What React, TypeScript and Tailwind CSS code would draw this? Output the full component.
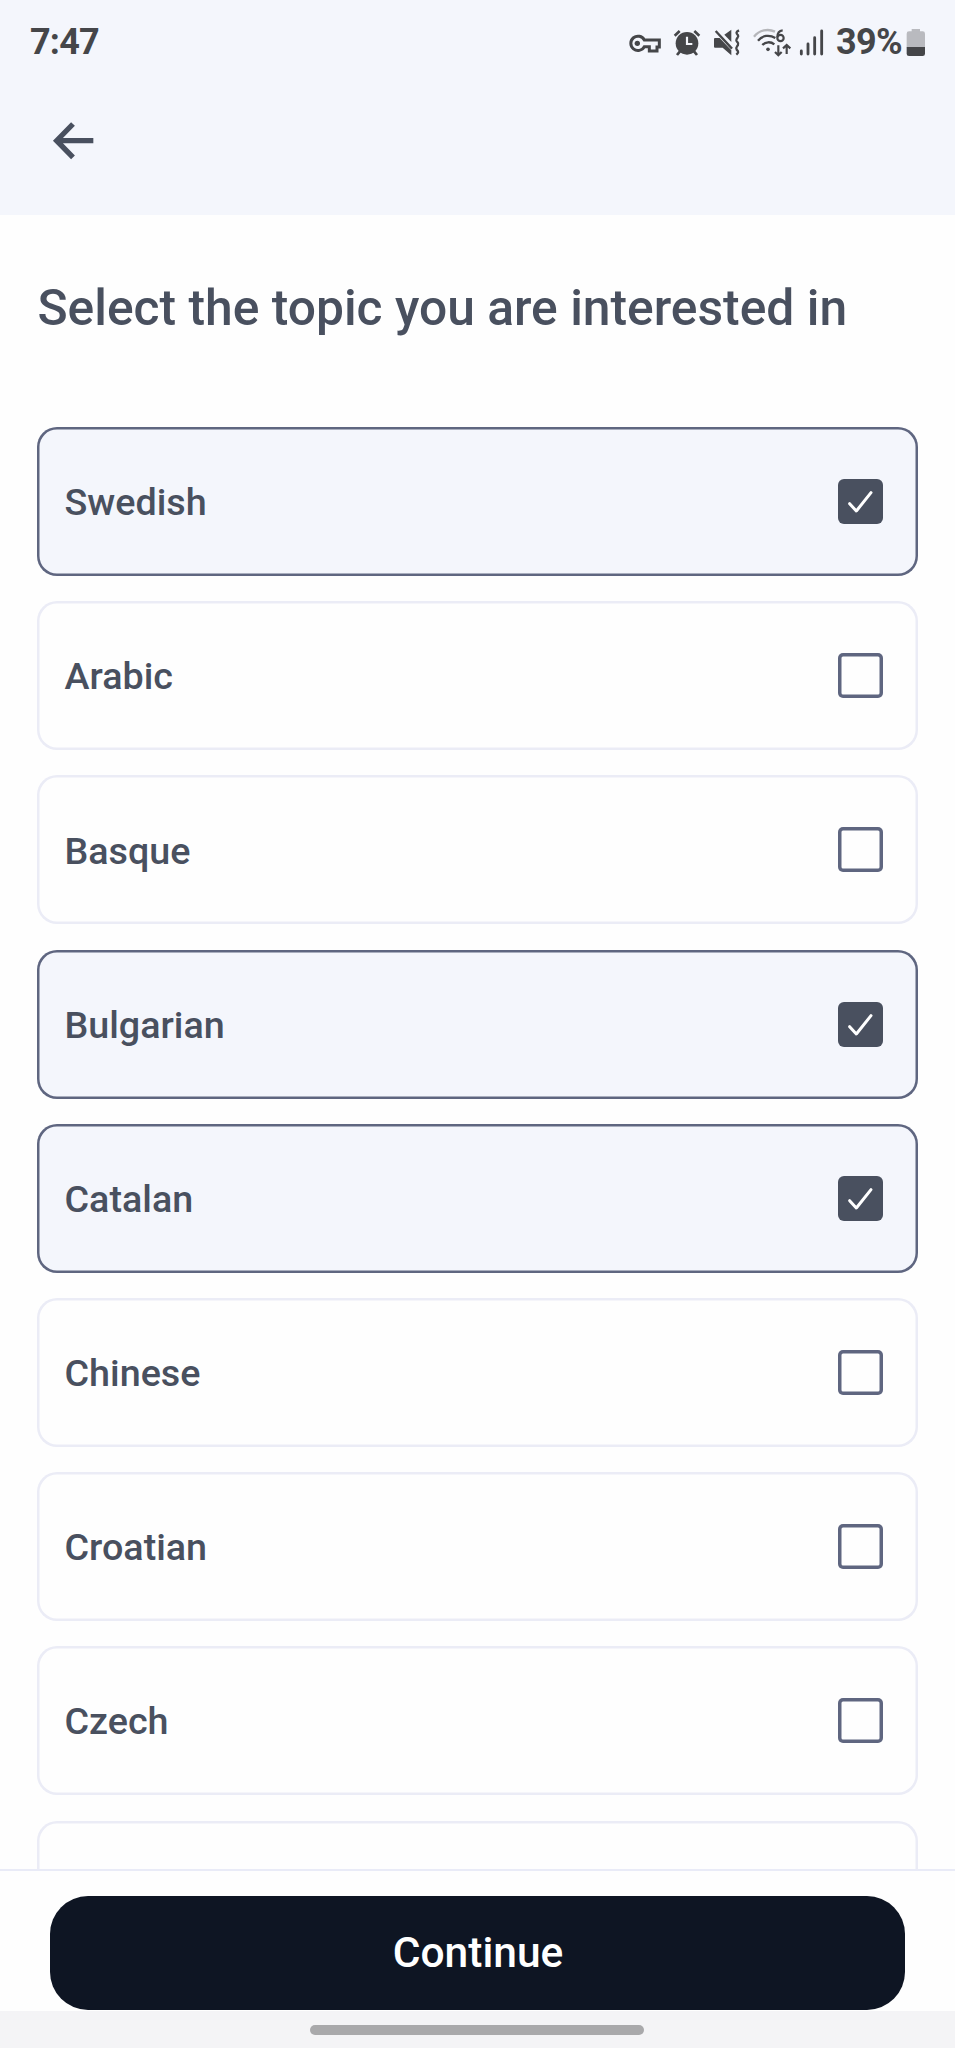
import { useState } from "react";

const ink = "#454649";

function KeyIcon() {
  return (
    <svg className="h-8 w-[38px]" viewBox="49 48 114 96" fill="none" stroke={ink}>
      <path
        d="M104 90H149V111H142V123H119V110H104A21.5 21.5 0 1 1 104 90Z"
        strokeWidth="9"
        strokeLinejoin="miter"
      />
      <circle cx="83" cy="100" r="8" fill={ink} stroke="none" />
    </svg>
  );
}

function AlarmIcon() {
  return (
    <svg className="ml-2 h-8 w-[30px]" viewBox="186 48 90 96" fill="none" stroke={ink}>
      <circle cx="231" cy="100" r="34" fill={ink} stroke="none" />
      <path d="M194 77L209 63M268 77L253 63" strokeWidth="8" />
      <path d="M210 124L201 135M252 124L261 135" strokeWidth="8" />
      <path d="M231 80V102H247" stroke="#f4f6fc" strokeWidth="6.5" />
    </svg>
  );
}

function MuteIcon() {
  return (
    <svg className="ml-2.5 h-8 w-[30px]" viewBox="306 48 90 96" fill="none" stroke={ink}>
      <path d="M312 87Q312 84 315 84H329L364 121V136L338 113H315Q312 113 312 110Z" fill={ink} stroke="none" />
      <path d="M343 74L364 59V96Z" fill={ink} stroke="none" />
      <path d="M317 63L366 116" strokeWidth="7" />
      <path
        d="M387 61C377 66 378 69 384 76C388 81 377 86 379 92C381 97 388 99 384 105C380 111 376 113 380 119C386 125 386 128 379 134"
        strokeWidth="7"
      />
    </svg>
  );
}

function WifiIcon() {
  return (
    <svg className="ml-2.5 h-8 w-10" viewBox="426 48 120 96" fill="none" stroke={ink}>
      <path d="M432 80C448 60 474 55 495 65" stroke="#b5b6ba" strokeWidth="7" />
      <path d="M444 92C457 76 478 73 496 84" strokeWidth="7" />
      <path d="M457 105C466 95 482 94 493 103" strokeWidth="7" />
      <circle cx="474" cy="118" r="5.5" fill={ink} stroke="none" />
      <path d="M518 61C508 62 502 69 502 82" strokeWidth="6.5" />
      <circle cx="511.500" cy="84" r="9.500" strokeWidth="6.500" />
      <path d="M505 106V135M495 126L505 136L515 126" strokeWidth="6.5" />
      <path d="M530 132V106M519 115L530 105L541 115" strokeWidth="6.5" />
    </svg>
  );
}

function SignalIcon() {
  return (
    <svg className="ml-1.5 h-8 w-[27px]" viewBox="564 48 81 96" fill="none" stroke={ink} strokeWidth="8.5" strokeLinecap="round">
      <path d="M574 123V132M594 102V132M614 83V132M635 63V132" />
    </svg>
  );
}

function BatteryIcon() {
  return (
    <svg className="h-8 w-[22px]" viewBox="885 48 66 96">
      <path d="M905 57H930V64H938Q945 64 945 71V112H890V71Q890 64 897 64H905Z" fill="#b9babf" />
      <path d="M890 111H945V131Q945 138 938 138H897Q890 138 890 131Z" fill={ink} />
    </svg>
  );
}

function Checkbox({ checked }: { checked: boolean }) {
  return checked ? (
    <span className="size-[45px] rounded-[6px] bg-[#49505f]">
      <svg className="size-full" viewBox="0 0 135 135" fill="none">
        <path d="M35 74L55 96L99 41" stroke="#fff" strokeWidth="9" strokeLinecap="round" strokeLinejoin="round" />
      </svg>
    </span>
  ) : (
    <span className="size-[45px] rounded-[5px] shadow-[inset_0_0_0_3.500px_#5f6680]" />
  );
}

const topics = ["Swedish", "Arabic", "Basque", "Bulgarian", "Catalan", "Chinese", "Croatian", "Czech"];

export default function App() {
  const [selected, setSelected] = useState(["Swedish", "Bulgarian", "Catalan"]);

  const toggle = (topic: string) =>
    setSelected((prev) => (prev.includes(topic) ? prev.filter((t) => t !== topic) : [...prev, topic]));

  return (
    <div className="flex h-[2048px] w-[955px] flex-col overflow-hidden bg-[#fefefe] font-['Roboto',sans-serif] text-[#49505f]">
      <header className="h-[215px] shrink-0 bg-[#f4f6fc]">
        <div className="flex h-[84px] items-center pr-7 pl-[30px] text-[#454649]">
          <span className="text-[36px] leading-none font-bold tracking-[-0.8px]">7:47</span>
          <div className="ml-auto flex items-center">
            <KeyIcon />
            <AlarmIcon />
            <MuteIcon />
            <WifiIcon />
            <SignalIcon />
            <span className="ml-[11px] w-[69px] text-[36px] leading-none font-bold tracking-[-0.7px]">39%</span>
            <BatteryIcon />
          </div>
        </div>
        <button className="mt-9 ml-[50px] block" aria-label="Back">
          <svg className="h-[42px] w-[47px]" viewBox="150 360 141 126" fill="none" stroke="#49505f" strokeWidth="16">
            <path d="M280 422H172M219 372L170 422L219 472" />
          </svg>
        </button>
      </header>

      <main className="min-h-0 flex-1 overflow-hidden px-[37px]">
        <h1 className="mt-[64px] h-[58px] pl-[0.500px] text-[49.750px] leading-[58px] font-medium whitespace-nowrap">
          Select the topic you are interested in
        </h1>
        <div className="mt-[90px] flex flex-col gap-[25.200px]">
          {topics.map((topic) => {
            const checked = selected.includes(topic);
            return (
              <button
                key={topic}
                onClick={() => toggle(topic)}
                className={`flex h-[149px] shrink-0 items-center justify-between rounded-[20px] pr-[35px] pl-[27.500px] text-left ${
                  checked
                    ? "bg-[#f4f6fc] shadow-[inset_0_0_0_2.500px_#5f6680]"
                    : "shadow-[inset_0_0_0_2.500px_#ebecf6]"
                }`}
              >
                <span className="pt-[3px] text-[37.700px] leading-none font-medium">{topic}</span>
                <Checkbox checked={checked} />
              </button>
            );
          })}
          <div className="h-[149px] shrink-0 rounded-[20px] shadow-[inset_0_0_0_2.500px_#ebecf6]" />
        </div>
      </main>

      <footer className="h-[142px] shrink-0 border-t-2 border-[#e9ebf7] px-[50px] pt-[25px]">
        <button className="h-[114px] w-full rounded-[38px] bg-[#0e1523] pl-px text-[42.500px] leading-none font-medium text-white">
          Continue
        </button>
      </footer>
      <nav className="flex h-[37px] shrink-0 justify-center bg-[#f4f4f6] pt-[14px] pr-[2px]">
        <div className="h-2.5 w-[334px] rounded-full bg-[#a9a9ab]" />
      </nav>
    </div>
  );
}
